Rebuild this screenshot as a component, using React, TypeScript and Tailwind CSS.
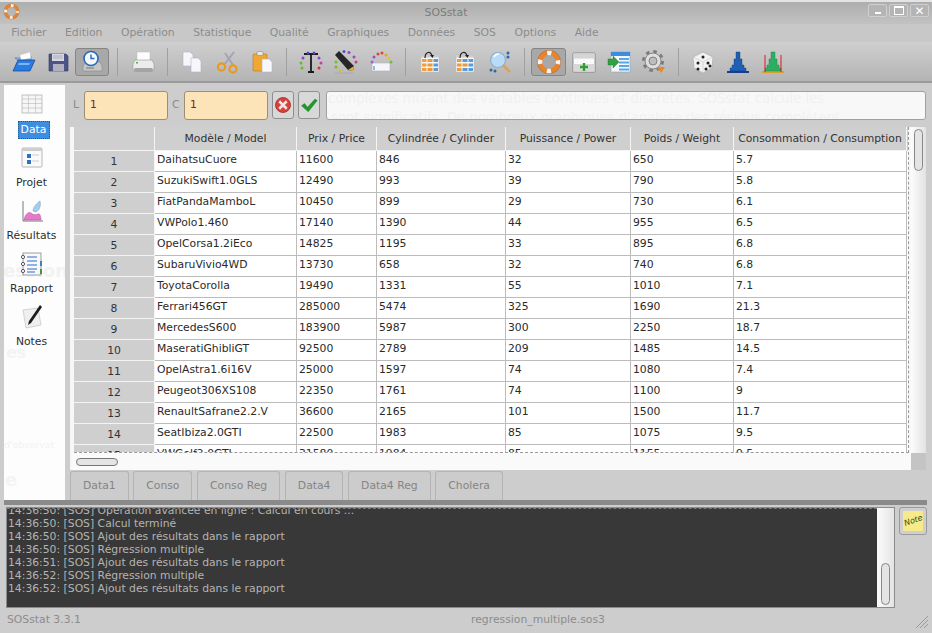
import type { ReactNode } from "react";

const rows = [
  ["DaihatsuCuore", "11600", "846", "32", "650", "5.7"],
  ["SuzukiSwift1.0GLS", "12490", "993", "39", "790", "5.8"],
  ["FiatPandaMamboL", "10450", "899", "29", "730", "6.1"],
  ["VWPolo1.460", "17140", "1390", "44", "955", "6.5"],
  ["OpelCorsa1.2iEco", "14825", "1195", "33", "895", "6.8"],
  ["SubaruVivio4WD", "13730", "658", "32", "740", "6.8"],
  ["ToyotaCorolla", "19490", "1331", "55", "1010", "7.1"],
  ["Ferrari456GT", "285000", "5474", "325", "1690", "21.3"],
  ["MercedesS600", "183900", "5987", "300", "2250", "18.7"],
  ["MaseratiGhibliGT", "92500", "2789", "209", "1485", "14.5"],
  ["OpelAstra1.6i16V", "25000", "1597", "74", "1080", "7.4"],
  ["Peugeot306XS108", "22350", "1761", "74", "1100", "9"],
  ["RenaultSafrane2.2.V", "36600", "2165", "101", "1500", "11.7"],
  ["SeatIbiza2.0GTI", "22500", "1983", "85", "1075", "9.5"],
  ["VWGolf2.0GTI", "31580", "1984", "85", "1155", "9.5"],
];

const headers = ["Modèle / Model", "Prix / Price", "Cylindrée / Cylinder", "Puissance / Power", "Poids / Weight", "Consommation / Consumption"];
const colWidths = ["w-[142px]", "w-[80px]", "w-[129px]", "w-[125px]", "w-[103px]", "w-[173px]"];
const menus = ["Fichier", "Edition", "Opération", "Statistique", "Qualité", "Graphiques", "Données", "SOS", "Options", "Aide"];
const tabs = ["Data1", "Conso", "Conso Reg", "Data4", "Data4 Reg", "Cholera"];
const logLines = [
  "14:36:50: [SOS] Calcul terminé",
  "14:36:50: [SOS] Ajout des résultats dans le rapport",
  "14:36:50: [SOS] Régression multiple",
  "14:36:51: [SOS] Ajout des résultats dans le rapport",
  "14:36:52: [SOS] Régression multiple",
  "14:36:52: [SOS] Ajout des résultats dans le rapport",
];

function Ico({ children, size = 24 }: { children: ReactNode; size?: number }) {
  return (
    <svg width={size} height={size} viewBox="0 0 24 24" className="block">
      {children}
    </svg>
  );
}

function Buoy({ size = 24 }: { size?: number }) {
  return (
    <Ico size={size}>
      <circle cx="12" cy="12" r="8.5" fill="none" stroke="#e8842c" strokeWidth="4.5" />
      <circle cx="12" cy="12" r="8.5" fill="none" stroke="#f4f4f4" strokeWidth="4.5" strokeDasharray="4 9.35" strokeDashoffset="2" />
      <circle cx="12" cy="12" r="10.8" fill="none" stroke="#a9602a" strokeWidth="0.5" />
    </Ico>
  );
}

function Dots({ pts }: { pts: [number, number, string][] }) {
  return (
    <>
      {pts.map(([x, y, c], i) => (
        <circle key={i} cx={x} cy={y} r="1.5" fill={c} />
      ))}
    </>
  );
}

function TableIcon({ flip }: { flip?: boolean }) {
  return (
    <Ico>
      <rect x="3" y="5" width="18" height="17" fill="#f6f6f6" stroke="#bbb" strokeWidth="0.6" />
      <rect x="3" y="5" width="18" height="2.5" fill="#ccc" />
      {[9, 13.5, 18].map((y) => (
        <g key={y}>
          <rect x="4" y={y} width="4.5" height="3" fill={flip ? "#ef9a3a" : "#f0a040"} />
          <rect x="9.5" y={y} width="5" height="3" fill={y === 13.5 || !flip ? "#ef9a3a" : "#5b9bd8"} />
          <rect x="15.5" y={y} width="4.5" height="3" fill="#5b9bd8" />
        </g>
      ))}
      <path d="M7 8 C7 2 13 0 14 6" fill="none" stroke="#222" strokeWidth="1.2" />
      <path d="M12 5 L16 5 L14.5 8z" fill="#222" />
    </Ico>
  );
}

function Hist({ green }: { green?: boolean }) {
  const fill = green ? "#2fae62" : "#1f5fb4";
  return (
    <Ico>
      <path d="M1 22h22" stroke={green ? "#d9a030" : "#16408a"} strokeWidth="2" />
      <path d="M4 21v-3h2v-3h2v-6h2v-7h4v7h2v6h2v3h2v3z" fill={fill} stroke={green ? "#1d7a42" : "#123a7c"} strokeWidth="0.4" />
      {green && <path d="M4 5v17M20 5v17" stroke="#e01818" strokeWidth="1" />}
    </Ico>
  );
}

const toolIcons: Record<string, ReactNode> = {
  open: (
    <Ico>
      <path d="M3 8h6l2-2h8v4l-13 0z" fill="#9cc3ea" stroke="#2a5a9c" strokeWidth="0.5" />
      <path d="M8 5l10-3 1 6-10 2z" fill="#fff" stroke="#bbb" strokeWidth="0.4" />
      <path d="M6 10h17l-5 11H1z" fill="#2a7ce0" stroke="#143f8c" strokeWidth="0.7" />
      <path d="M7 13h11l-1 2H6z" fill="#7ab7f4" />
    </Ico>
  ),
  save: (
    <Ico>
      <path d="M3 4h17l2 2v15H3z" fill="#4c5488" stroke="#30355c" strokeWidth="0.6" />
      <rect x="6" y="4" width="12" height="7" fill="#d8d8e2" />
      <path d="M7 6h10M7 8h10" stroke="#9a9ab0" strokeWidth="0.7" />
      <rect x="7" y="14" width="11" height="7" fill="#b0b0c0" />
    </Ico>
  ),
  recent: (
    <Ico>
      <path d="M3 16 6 12h14l2 4v5H3z" fill="#c6c6c6" stroke="#888" strokeWidth="0.6" />
      <path d="M6 18h8" stroke="#777" strokeWidth="1" />
      <circle cx="11" cy="8.5" r="7" fill="#f4f8ff" stroke="#2868b8" strokeWidth="1.6" />
      <path d="M11 4.5v4h3.5" fill="none" stroke="#2868b8" strokeWidth="1.4" />
    </Ico>
  ),
  print: (
    <Ico>
      <rect x="6" y="2" width="13" height="9" fill="#fdfdfd" stroke="#bbb" strokeWidth="0.5" />
      <path d="M4 10h17l2 4v6H2v-6z" fill="#ececec" stroke="#999" strokeWidth="0.6" />
      <rect x="3" y="18" width="19" height="4" rx="1.5" fill="#a4a4a4" />
      <rect x="5" y="12" width="2" height="1.5" fill="#48b048" />
    </Ico>
  ),
  copy: (
    <Ico>
      <path d="M3 2h7l3 3v11H3z" fill="#f7f7fb" stroke="#b0b4c4" strokeWidth="0.6" />
      <path d="M11 8h7l3 3v11H11z" fill="#f7f7fb" stroke="#b0b4c4" strokeWidth="0.6" />
    </Ico>
  ),
  cut: (
    <Ico>
      <path d="M19 2 9 15M10 3l8 12" stroke="#a4a4b4" strokeWidth="2" />
      <circle cx="6.5" cy="17" r="3.6" fill="none" stroke="#e89a20" strokeWidth="2.2" />
      <circle cx="18" cy="19" r="3.6" fill="none" stroke="#e89a20" strokeWidth="2.2" />
    </Ico>
  ),
  paste: (
    <Ico>
      <rect x="3" y="4" width="14" height="17" rx="1" fill="#f0a830" stroke="#a87018" strokeWidth="0.5" />
      <rect x="7" y="1.5" width="6" height="4" rx="1" fill="#e8e8e8" stroke="#777" strokeWidth="0.5" />
      <path d="M12 9h7l3 3v10H12z" fill="#f8f8fc" stroke="#b0b4c4" strokeWidth="0.6" />
    </Ico>
  ),
  fontT: (
    <Ico>
      <path d="M5 4h14M12 4v18M9 22h6" stroke="#1a1a1a" strokeWidth="1.8" fill="none" />
      <Dots pts={[[4, 8, "#8844cc"], [2, 13, "#60c020"], [3, 18, "#60c020"], [20, 8, "#9048c8"], [22, 13, "#c040a0"], [20, 18, "#e03030"], [9, 3, "#4848c8"], [15, 3, "#6040c0"]]} />
    </Ico>
  ),
  pencil: (
    <Ico>
      <path d="M1 5l4-4 15 15-1 5-5-1z" fill="#262626" />
      <path d="M14 20l5 1 1-5z" fill="#e8b040" />
      <path d="M1 23h18" stroke="#a8a8c0" strokeWidth="1" />
      <Dots pts={[[2, 12, "#70c020"], [2, 17, "#70c020"], [6, 21, "#d8c020"], [10, 1.5, "#6048c8"], [15, 2.5, "#9048c8"], [20, 7, "#a048c0"], [22, 12, "#c04080"]]} />
    </Ico>
  ),
  arc: (
    <Ico>
      <rect x="3" y="13" width="18" height="8" fill="#f6f6fa" stroke="#b0b0c0" strokeWidth="0.6" />
      <Dots pts={[[3, 12, "#a060d0"], [5, 7, "#9050c8"], [9, 4, "#e04040"], [13, 3, "#e84040"], [17, 5, "#f0a020"], [20, 8, "#f0c020"], [22, 12, "#60c040"]]} />
      <path d="M5 16v4" stroke="#3c7cd0" strokeWidth="1" />
    </Ico>
  ),
  tableA: <TableIcon />,
  tableB: <TableIcon flip />,
  search: (
    <Ico>
      <circle cx="10" cy="10" r="7.5" fill="#b8dcf8" stroke="#8ab0d0" strokeWidth="1.2" />
      <path d="M6 7a5 5 0 0 1 5-3" stroke="#fff" strokeWidth="1.4" fill="none" />
      <path d="M15 15l7 7" stroke="#e0a050" strokeWidth="2.6" />
      <Dots pts={[[20, 3, "#2868b0"], [20, 7, "#2868b0"], [3, 20, "#2868b0"], [7, 21, "#2868b0"]]} />
    </Ico>
  ),
  buoy: <Buoy size={26} />,
  addRow: (
    <Ico>
      <rect x="1" y="3" width="22" height="19" rx="1" fill="#fafafa" stroke="#777" strokeWidth="0.8" />
      <rect x="1.5" y="3.5" width="21" height="5" fill="#d4d4d4" />
      <rect x="1.5" y="14" width="21" height="7.5" fill="#d8d8d8" />
      <path d="M12 13v8M8 17h8" stroke="#30a030" strokeWidth="2.4" />
    </Ico>
  ),
  importTable: (
    <Ico>
      <rect x="4" y="2" width="19" height="20" fill="#f4f8fc" stroke="#8aa0b8" strokeWidth="0.6" />
      <rect x="4" y="2" width="19" height="4" fill="#3c8ce0" />
      <path d="M12 9h10M12 12.5h10M12 16h10M12 19.5h10" stroke="#58a8e8" strokeWidth="2" />
      <path d="M1 9h5V6l6 6-6 6v-3H1z" fill="#30a040" stroke="#207030" strokeWidth="0.4" />
    </Ico>
  ),
  gear: (
    <Ico>
      <circle cx="11" cy="11" r="9.6" fill="none" stroke="#7c7c7c" strokeWidth="2.8" strokeDasharray="3.6 3.94" />
      <circle cx="11" cy="11" r="8" fill="#dedede" stroke="#7c7c7c" strokeWidth="0.9" />
      <circle cx="11" cy="11" r="4" fill="#bdbdbd" stroke="#7c7c7c" strokeWidth="0.9" />
      <path d="M15 17h8l-4 6z" fill="#e88a20" />
    </Ico>
  ),
  dice: (
    <Ico>
      <path d="M12 2l10 5-1 11-9 5-9-5-1-11z" fill="#f2f2f2" stroke="#aaa" strokeWidth="0.7" />
      <path d="M2 7l10 5 10-5M12 12v11" fill="none" stroke="#cfcfcf" strokeWidth="0.7" />
      <Dots pts={[[12, 7, "#222"], [7, 13, "#222"], [7, 19, "#222"], [17, 13, "#222"], [15, 19, "#222"], [19, 16, "#222"]]} />
    </Ico>
  ),
  histBlue: <Hist />,
  histGreen: <Hist green />,
};

const toolbar: (string | null)[] = ["open", "save", "recent", null, "print", null, "copy", "cut", "paste", null, "fontT", "pencil", "arc", null, "tableA", "tableB", "search", null, "buoy", "addRow", "importTable", "gear", null, "dice", "histBlue", "histGreen"];

function NavIcon({ kind }: { kind: string }) {
  if (kind === "Data")
    return (
      <Ico>
        <rect x="2" y="2" width="20" height="18" fill="#f6f6f6" stroke="#aaa" strokeWidth="0.7" />
        <path d="M2 6h20M2 10.5h20M2 15h20M8.5 2v18M15.5 2v18" stroke="#bbb" strokeWidth="0.6" />
      </Ico>
    );
  if (kind === "Projet")
    return (
      <Ico>
        <rect x="2" y="2" width="20" height="19" rx="1" fill="#fafafa" stroke="#999" strokeWidth="0.7" />
        <rect x="2.5" y="2.5" width="19" height="2.5" fill="#ccc" />
        <rect x="7" y="8" width="4" height="4" fill="#3070c0" />
        <rect x="7" y="14" width="4" height="4" fill="#3070c0" />
        <path d="M12 9h7M12 15h7" stroke="#ccc" strokeWidth="1" />
      </Ico>
    );
  if (kind === "Résultats")
    return (
      <Ico>
        <path d="M3 2v20h20" fill="none" stroke="#555" strokeWidth="0.8" />
        <path d="M4 21c1-6 5-9 7-7s5 2 7 1 3 3 3 6z" fill="#e878c8" stroke="#b04898" strokeWidth="0.5" />
        <path d="M13 12c0-4 4-8 7-10 1 4 0 9-4 11z" fill="#a8ccec" stroke="#7898c0" strokeWidth="0.5" />
      </Ico>
    );
  if (kind === "Rapport")
    return (
      <Ico>
        <rect x="3" y="1" width="18" height="22" fill="#f8f8fc" stroke="#777" strokeWidth="0.7" />
        {[5, 12, 19].map((y) => (
          <circle key={y} cx="3" cy={y} r="1.6" fill="#fff" stroke="#333" strokeWidth="0.8" />
        ))}
        <path d="M7 5h10M7 9h10M7 13h10M7 17h10M7 20h8" stroke="#2a6cc0" strokeWidth="1" />
        <rect x="20" y="9" width="2" height="5" fill="#3a80d0" />
        <rect x="20" y="17" width="2" height="5" fill="#30a030" />
      </Ico>
    );
  return (
    <Ico>
      <path d="M3 5l15-2 3 17-15 3z" fill="#efefef" stroke="#bbb" strokeWidth="0.6" />
      <path d="M20 0 9 16l-1 4 3-2L22 2z" fill="#1c1c1c" />
    </Ico>
  );
}

function WinButton({ children }: { children: ReactNode }) {
  return <div className="flex h-[13px] w-[19px] items-center justify-center rounded-[2px] border border-[#cfcfcf] bg-[#b4b4b4]">{children}</div>;
}

function Toolbar() {
  return (
    <div className="flex h-[41px] items-center border-b-2 border-[#9a9a9a] bg-gradient-to-b from-[#cfcfcf] to-[#b4b4b4] pl-[7px]">
      {toolbar.map((t, i) => {
        if (!t) return <div key={i} className={i === 3 ? "mx-[8px] h-[28px] w-px bg-[#a0a0a0]" : "mx-[6.5px] h-[28px] w-px bg-[#a0a0a0]"} />;
        const active = t === "recent" || t === "buoy";
        const width = i < 6 ? "w-[34px]" : "w-[35px]";
        return (
          <div key={i} className={active ? `flex h-[28px] ${width} items-center justify-center rounded-[3px] border border-[#858585] bg-[#a8a8a8]` : `flex h-[28px] ${width} items-center justify-center`}>
            {toolIcons[t]}
          </div>
        );
      })}
    </div>
  );
}

function Sidebar() {
  return (
    <div className="relative ml-[4px] flex w-[61px] shrink-0 flex-col items-center overflow-hidden bg-[#fdfdfd] pr-[6px] pt-[8px] text-[10.8px] text-[#2e2e2e]">
      <div className="pointer-events-none absolute left-[-1px] top-[172px] whitespace-nowrap text-[18px] font-bold text-[#f2f2f2]">ession</div>
      <div className="pointer-events-none absolute left-[2px] top-[256px] text-[16px] font-bold text-[#f4f4f4]">es</div>
      <div className="pointer-events-none absolute left-0 top-[353px] whitespace-nowrap text-[9.5px] text-[#f2f2f2]">d'observat</div>
      <div className="pointer-events-none absolute left-[1px] top-[381px] text-[18px] font-bold text-[#f4f4f4]">e</div>
      {["Data", "Projet", "Résultats", "Rapport", "Notes"].map((n) => (
        <div key={n} className="relative flex h-[53px] w-full flex-col items-center">
          <NavIcon kind={n} />
          {n === "Data" ? (
            <span className="ml-[4px] mt-[4px] h-[18px] w-[32px] bg-[#3d8ee0] text-center leading-[18px] text-white outline-1 outline-dotted outline-[#1d5ea0] -outline-offset-1">Data</span>
          ) : (
            <span className="mt-[6px] leading-[14px]">{n}</span>
          )}
        </div>
      ))}
    </div>
  );
}

function DataTable() {
  return (
    <div className="flex h-[343px] bg-[#f7f7f7]">
      <div className="flex w-[841px] flex-col pl-[2px]">
        <div className="ml-[2px] h-[326px] w-[835px] overflow-hidden border-r border-b border-dashed border-[#999] bg-white text-[10.8px] text-[#2a2a2a]">
          <div className="flex h-[24px] bg-[#cfcfcf] text-[#333]">
            <div className="w-[81px] shrink-0 border-r border-b border-[#f4f4f4]" />
            {headers.map((h, i) => (
              <div key={h} className={`${colWidths[i]} shrink-0 overflow-hidden whitespace-nowrap border-r border-b border-[#f4f4f4] text-center leading-[23px]`}>
                {h}
              </div>
            ))}
          </div>
          {rows.map((r, idx) => (
            <div key={r[0]} className="flex h-[21px]">
              <div className="w-[81px] shrink-0 border-r border-b border-[#f4f4f4] bg-[#cfcfcf] pt-px text-center leading-[20px] text-[#333]">{idx + 1}</div>
              {r.map((c, i) => (
                <div key={i} className={`${colWidths[i]} shrink-0 overflow-hidden whitespace-nowrap border-r border-b border-[#bcbcbc] pl-[2px] leading-[18px]`}>
                  {c}
                </div>
              ))}
            </div>
          ))}
        </div>
        <div className="flex h-[17px] items-center bg-[#fafafa] pl-[4px]">
          <div className="h-[8px] w-[42px] rounded-full border border-[#777] bg-[#e4e4e4]" />
        </div>
      </div>
      <div className="flex w-[15px] flex-col items-center bg-gradient-to-r from-[#fcfcfc] to-[#e2e2e2] pt-[2px]">
        <div className="h-[42px] w-[9px] rounded-full border border-[#888] bg-[#e4e4e4]" />
        <div className="mt-auto h-[17px] w-full bg-[#c4c4c4]" />
      </div>
    </div>
  );
}

function MainPanel() {
  return (
    <div className="ml-[5px] flex min-w-0 flex-1 flex-col pr-[6px]">
      <div className="flex h-[42px] items-center gap-[4px] pt-[6px] pb-[8px] pl-[3px] text-[10.8px]">
        <span className="w-[7px] text-[#8c8c8c]">L</span>
        <div className="flex h-[29px] w-[84px] items-center rounded-[3px] border border-[#a08e70] bg-[#fde3b8] pl-[5px] text-[#7a2a20]">1</div>
        <span className="w-[8px] text-[#8c8c8c]">C</span>
        <div className="flex h-[29px] w-[84px] items-center rounded-[3px] border border-[#a08e70] bg-[#fde3b8] pl-[5px] text-[#7a2a20]">1</div>
        <div className="flex h-[28px] w-[22px] items-center justify-center rounded-[3px] border border-[#8f8f8f] bg-[#d8d8d8]">
          <Ico size={18}>
            <circle cx="12" cy="12" r="10" fill="#d8403c" stroke="#a02020" strokeWidth="1" />
            <path d="M7 7l10 10M17 7 7 17" stroke="#f4e4e4" strokeWidth="3.4" />
          </Ico>
        </div>
        <div className="flex h-[28px] w-[22px] items-center justify-center rounded-[3px] border border-[#8f8f8f] bg-[#d8d8d8]">
          <Ico size={18}>
            <path d="M2 13l4-3 4 5L20 4l3 2-12 15z" fill="#1f9a28" stroke="#126a18" strokeWidth="0.5" />
          </Ico>
        </div>
        <div className="ml-[2px] h-[29px] flex-1 overflow-hidden whitespace-nowrap rounded-[3px] border border-[#a0a0a0] bg-[#f8f8f8] pl-px text-[13.2px] leading-[19px] text-[#f1f1f1]">
          <div className="-mt-[3px]">complexes mixant des variables continues et discrètes. SOSstat calcule les</div>
          <div className="pl-[3px]">sont significatifs. De nombreux graphiques d'analyse des résidus complètent</div>
        </div>
      </div>
      <DataTable />
      <div className="flex h-[30px] gap-[4.6px] pt-px">
        {tabs.map((t) => (
          <div key={t} className="flex h-[29px] items-center rounded-t-[3px] border border-b-0 border-[#b4b4b4] bg-[#cccccc] px-[12px] text-[10.8px] text-[#858585]">
            {t}
          </div>
        ))}
      </div>
    </div>
  );
}

function LogPanel() {
  return (
    <div className="flex h-[103px] pl-[6px] pr-[5px] pt-[2px]">
      <div className="flex h-[101px] w-[889px] border border-[#8c8c8c]">
        <div className="w-[870px] overflow-hidden border-t border-dashed border-[#777] bg-[#383838] pl-px text-[10.8px] leading-[13px] text-[#b4b4b4]">
          <div className="mt-[-5px] whitespace-nowrap">14:36:50: [SOS] Opération avancée en ligne : Calcul en cours ...</div>
          {logLines.map((l, i) => (
            <div key={i} className="whitespace-nowrap">
              {l}
            </div>
          ))}
        </div>
        <div className="flex flex-1 flex-col items-center bg-gradient-to-r from-[#fcfcfc] to-[#e4e4e4] pt-[55px]">
          <div className="h-[42px] w-[9px] rounded-full border border-[#888] bg-[#e4e4e4]" />
        </div>
      </div>
      <div className="ml-[4px] flex h-[28px] w-[28px] items-center justify-center rounded-[3px] border border-[#9a9a9a] bg-[#cfcfcf]">
        <div className="flex h-[20px] w-[20px] items-center justify-center bg-[#f6ea8a]">
          <span className="rotate-[-20deg] text-[8px] italic leading-none text-[#2a4a20]">Note</span>
        </div>
      </div>
    </div>
  );
}

export default function App() {
  return (
    <div className="flex h-[633px] w-[932px] flex-col overflow-hidden bg-[#cdcdcd] font-['DejaVu_Sans',sans-serif]">
      <div className="relative flex h-[24px] shrink-0 items-center justify-center border-t-2 border-[#e4e4e4] bg-gradient-to-b from-[#aeaeae] to-[#c2c2c2] pr-[40px] text-[10.8px] text-[#7c7c7c]">
        <div className="absolute left-[3px] top-[1px]">
          <Buoy size={17} />
        </div>
        SOSstat
        <div className="absolute right-[3px] top-[2px] flex gap-[2px]">
          <WinButton>
            <div className="mt-[5px] h-[2px] w-[6px] bg-white" />
          </WinButton>
          <WinButton>
            <div className="h-[9px] w-[10px] border-[1.5px] border-t-[2px] border-white" />
          </WinButton>
          <WinButton>
            <span className="text-[12px] font-bold leading-none text-white">✕</span>
          </WinButton>
        </div>
      </div>
      <div className="flex h-[18px] shrink-0 items-center bg-[#c8c8c8] pl-[2px] text-[10.8px] text-[#8c8c8c]">
        {menus.map((m) => (
          <span key={m} className="px-[9.25px]">
            {m}
          </span>
        ))}
      </div>
      <Toolbar />
      <div className="mt-[2px] flex h-[415px] shrink-0">
        <Sidebar />
        <MainPanel />
      </div>
      <div className="ml-[4px] mr-[5px] h-[5px] shrink-0 bg-[#8a8a8a]" />
      <LogPanel />
      <div className="relative flex h-[25px] shrink-0 items-center text-[10.8px] text-[#8c8c8c]">
        <span className="ml-[7px]">SOSstat 3.3.1</span>
        <span className="absolute left-[471px]">regression_multiple.sos3</span>
        <svg width="14" height="14" viewBox="0 0 14 14" className="absolute right-[3px] bottom-[4px]">
          <path d="M1 13 13 1M5 13l8-8M9 13l4-4" stroke="#999" strokeWidth="1" />
        </svg>
      </div>
    </div>
  );
}
